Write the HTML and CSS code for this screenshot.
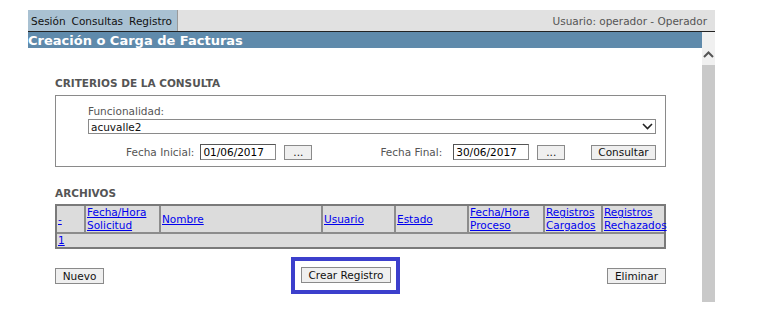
FILE: index.html
```html
<!DOCTYPE html>
<html lang="es">
<head>
<meta charset="utf-8">
<link rel="stylesheet" href="styles.css">
</head>
<body>
<div class="app">
  <div class="topbar">
    <div class="menu"><span>Sesión</span><span>Consultas</span><span>Registro</span></div>
    <div class="user">Usuario: operador - Operador</div>
  </div>
  <div class="frame">
    <div class="main">
      <div class="title">Creación o Carga de Facturas</div>
      <div class="content">
        <div class="section-title">CRITERIOS DE LA CONSULTA</div>
        <div class="criteria">
          <div class="label">Funcionalidad:</div>
          <div class="select"><span>acuvalle2</span>
            <svg width="11" height="7" viewBox="0 0 11 7"><path d="M1 1l4.5 4.5L10 1" fill="none" stroke="#222" stroke-width="1.6"/></svg>
          </div>
          <div class="dates">
            <span class="dlabel">Fecha Inicial:</span>
            <span class="input">01/06/2017</span>
            <span class="btn dots">...</span>
            <span class="dlabel final">Fecha Final:</span>
            <span class="input">30/06/2017</span>
            <span class="btn dots">...</span>
            <span class="btn consult">Consultar</span>
          </div>
        </div>
        <div class="section-title archivos">ARCHIVOS</div>
        <table class="grid">
          <colgroup>
            <col class="c1"><col class="c2"><col class="c3"><col class="c4"><col class="c5"><col class="c6"><col class="c7"><col class="c8">
          </colgroup>
          <tr class="head">
            <td><a>-</a></td>
            <td><a>Fecha/Hora Solicitud</a></td>
            <td><a>Nombre</a></td>
            <td><a>Usuario</a></td>
            <td><a>Estado</a></td>
            <td><a>Fecha/Hora Proceso</a></td>
            <td><a>Registros Cargados</a></td>
            <td class="last"><a>Registros Rechazados</a></td>
          </tr>
          <tr class="row">
            <td colspan="8"><a>1</a></td>
          </tr>
        </table>
        <div class="actions">
          <span class="btn nuevo">Nuevo</span>
          <span class="highlight"><span class="btn">Crear Registro</span></span>
          <span class="btn eliminar">Eliminar</span>
        </div>
      </div>
    </div>
    <div class="scrollbar">
      <div class="arrow"><svg width="13" height="9" viewBox="0 0 13 9"><path d="M2 7l4.5-4.5L11 7" fill="none" stroke="#555" stroke-width="2"/></svg></div>
      <div class="thumb"></div>
    </div>
  </div>
</div>
</body>
</html>
```
FILE: styles.css
```css
html, body { margin: 0; padding: 0; background: #fff; }
body { font-family: "DejaVu Sans", Verdana, sans-serif; font-size: 10.5px; color: #000; }
.app { margin: 10px 0 0 28px; width: 687px; }
.topbar { display: flex; height: 21px; background: #e1e1e1; border-bottom: 1px solid #222; }
.menu { display: flex; align-items: center; gap: 6px; padding: 0 5px 0 3px; background: #a9c1d2; border-right: 1px solid #9a9a9a; width: 141px; }
.menu span { color: #111; }
.user { margin-left: auto; display: flex; align-items: center; color: #555; padding-right: 8px; }
.frame { display: flex; height: 270px; }
.main { flex: 1; display: flex; flex-direction: column; }
.title { background: #5f8aab; color: #fff; font-weight: bold; font-size: 13px; line-height: 17px; height: 16px; overflow: visible; }
.content { padding: 29px 0 0 27px; }
.section-title { font-weight: bold; color: #555; line-height: 13px; }
.criteria { margin-top: 5px; width: 611px; height: 72px; border: 1px solid #8a8a8a; box-sizing: border-box; padding: 9px 9px 0 32px; }
.label { color: #555; line-height: 13px; }
.select { margin-top: 1px; height: 15px; border: 1px solid #8a8a8a; box-sizing: border-box; display: flex; align-items: center; justify-content: space-between; padding: 0 2px 0 2px; color: #111; }
.select svg { display: block; }
.dates { display: flex; align-items: center; margin-top: 10px; margin-left: 38px; height: 16px; }
.dlabel { color: #555; margin-right: 6px; }
.dlabel.final { margin-left: 68px; margin-right: 11px; }
.input { width: 76px; height: 16px; box-sizing: border-box; border: 1px solid #8a8a8a; border-top-color: #555; border-left-color: #555; padding-left: 2px; line-height: 14px; }
.btn { display: inline-flex; align-items: center; justify-content: center; height: 15px; box-sizing: border-box; border: 1px solid #8a8a8a; background: #efefef; padding: 0 6px; color: #111; }
.dots { margin-left: 8px; width: 28px; padding: 0; }
.consult { margin-left: auto; width: 65px; padding: 0; }
.archivos { margin-top: 20px; }
.grid { margin-top: 4px; border-collapse: separate; border-spacing: 0; width: 611px; table-layout: fixed; background: #dcdcdc; border: 2px solid #7a7a7a; }
.grid td { padding: 0 0 0 1px; vertical-align: middle; line-height: 13px; white-space: nowrap; overflow: visible; }
.head td { white-space: normal; }
.grid a { color: #0000ee; text-decoration: underline; }
.head td { height: 26px; border-right: 2px solid #8c8c8c; border-bottom: 2px solid #8c8c8c; box-sizing: border-box; }
.head td.last { border-right: 0; }
.row td { height: 13px; }
.c1 { width: 29px; }
.c2 { width: 75px; }
.c3 { width: 162px; }
.c4 { width: 73px; }
.c5 { width: 73px; }
.c6 { width: 76px; }
.c7 { width: 58px; }
.c8 { width: 61px; }
.actions { display: flex; align-items: center; margin-top: 8px; width: 611px; }
.actions .btn { height: 16px; padding: 0 8px; }
.nuevo { width: 49px; }
.eliminar { width: 59px; margin-left: auto; }
.highlight { border: 4px solid #3c3fcc; padding: 6px 5px 7px 6px; margin-left: 187px; }
.highlight .btn { width: 90px; padding: 0; }
.scrollbar { width: 13px; background: #f0f0f0; display: flex; flex-direction: column; }
.arrow { height: 33px; display: flex; align-items: flex-end; justify-content: center; box-sizing: border-box; padding-bottom: 6px; }
.thumb { flex: 1; background: #c9c9c9; }
```
